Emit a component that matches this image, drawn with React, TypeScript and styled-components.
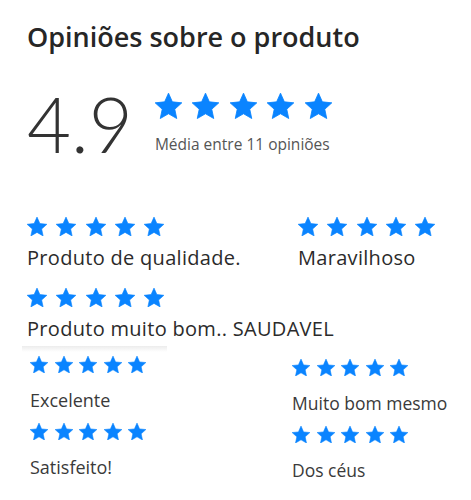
import styled, { createGlobalStyle } from "styled-components";

const GlobalStyle = createGlobalStyle`
  html, body {
    margin: 0;
    padding: 0;
    background: #ffffff;
  }
  body {
    font-family: "Open Sans", Lato, "Liberation Sans", sans-serif;
    color: #333333;
  }
`;

const STAR_BLUE = "#0a84ff";

const Page = styled.div`
  width: 471px;
  height: 500px;
  overflow: hidden;
  display: flex;
  flex-direction: column;
  padding: 22px 0 0 27px;
  box-sizing: border-box;
`;

const Title = styled.h2`
  margin: 0;
  font-size: 27px;
  font-weight: 600;
  line-height: 30px;
  color: #262626;
`;

const Summary = styled.div`
  display: flex;
  align-items: flex-start;
  margin-top: 40px;
  gap: 22px;
`;

const Average = styled.div`
  font-family: Lato, "Open Sans", sans-serif;
  font-size: 76px;
  font-weight: 300;
  line-height: 76px;
  color: #333333;
  margin-top: -6px;
`;

const SummaryRight = styled.div`
  display: flex;
  flex-direction: column;
  padding-top: 1px;
`;

const Stars = styled.div<{ $gap: number }>`
  display: flex;
  gap: ${({ $gap }) => $gap}px;
`;

const Caption = styled.div`
  margin-top: 16px;
  font-size: 15.5px;
  line-height: 18px;
  color: #555555;
`;

const UpperList = styled.div`
  display: flex;
  flex-direction: column;
  margin-top: 55px;
`;

const UpperRow = styled.div`
  display: flex;
  height: 71px;
`;

const UpperItem = styled.div<{ $width?: number }>`
  display: flex;
  flex-direction: column;
  width: ${({ $width }) => ($width ? `${$width}px` : "auto")};
  white-space: nowrap;
`;

const UpperText = styled.div`
  margin-top: 10px;
  font-size: 20px;
  line-height: 24px;
  letter-spacing: 0.3px;
  color: #2b2b2b;
`;

const Fade = styled.div`
  margin: -13px 0 0 -5px;
  width: 145px;
  height: 6px;
  background: linear-gradient(#ececec, #ffffff);
`;

const LowerGrid = styled.div`
  display: grid;
  grid-template-columns: 262px auto;
  margin: 4px 0 0 3px;
`;

const LowerColumn = styled.div<{ $offset: number }>`
  display: flex;
  flex-direction: column;
  padding-top: ${({ $offset }) => $offset}px;
`;

const LowerItem = styled.div`
  display: flex;
  flex-direction: column;
  height: 67px;
  white-space: nowrap;
`;

const LowerText = styled.div<{ $size: number }>`
  margin-top: 17px;
  font-size: ${({ $size }) => $size}px;
  line-height: 20px;
  color: #3a3a3a;
`;

const starPoints = (() => {
  const pts: string[] = [];
  for (let i = 0; i < 10; i++) {
    const r = i % 2 === 0 ? 10 : 4.7;
    const a = (Math.PI / 5) * i - Math.PI / 2;
    pts.push(`${(r * Math.cos(a)).toFixed(2)},${(r * Math.sin(a)).toFixed(2)}`);
  }
  return pts.join(" ");
})();

const Star = ({ size }: { size: number }) => (
  <svg width={size} height={size * 0.951} viewBox="-9.6 -10.1 19.2 18.3">
    <polygon points={starPoints} fill={STAR_BLUE} stroke={STAR_BLUE} strokeWidth="0.6" strokeLinejoin="round" />
  </svg>
);

const FiveStars = ({ size, gap }: { size: number; gap: number }) => (
  <Stars $gap={gap}>
    {[0, 1, 2, 3, 4].map((i) => (
      <Star size={size} key={i} />
    ))}
  </Stars>
);

const lowerLeft = ["Excelente", "Satisfeito!"];
const lowerRight = ["Muito bom mesmo", "Dos céus"];

const App = () => {
  return (
    <Page>
      <GlobalStyle />
      <Title>Opiniões sobre o produto</Title>
      <Summary>
        <Average>4.9</Average>
        <SummaryRight>
          <FiveStars size={27} gap={10.5} />
          <Caption>Média entre 11 opiniões</Caption>
        </SummaryRight>
      </Summary>
      <UpperList>
        <UpperRow>
          <UpperItem $width={271}>
            <FiveStars size={20} gap={9.3} />
            <UpperText>Produto de qualidade.</UpperText>
          </UpperItem>
          <UpperItem>
            <FiveStars size={20} gap={9.3} />
            <UpperText>Maravilhoso</UpperText>
          </UpperItem>
        </UpperRow>
        <UpperRow>
          <UpperItem>
            <FiveStars size={20} gap={9.3} />
            <UpperText>Produto muito bom.. SAUDAVEL</UpperText>
          </UpperItem>
        </UpperRow>
      </UpperList>
      <Fade />
      <LowerGrid>
        <LowerColumn $offset={0}>
          {lowerLeft.map((text) => (
            <LowerItem key={text}>
              <FiveStars size={18} gap={6.6} />
              <LowerText $size={18}>{text}</LowerText>
            </LowerItem>
          ))}
        </LowerColumn>
        <LowerColumn $offset={3}>
          {lowerRight.map((text) => (
            <LowerItem key={text}>
              <FiveStars size={18} gap={6.6} />
              <LowerText $size={17.5}>{text}</LowerText>
            </LowerItem>
          ))}
        </LowerColumn>
      </LowerGrid>
    </Page>
  );
};

export default App;
